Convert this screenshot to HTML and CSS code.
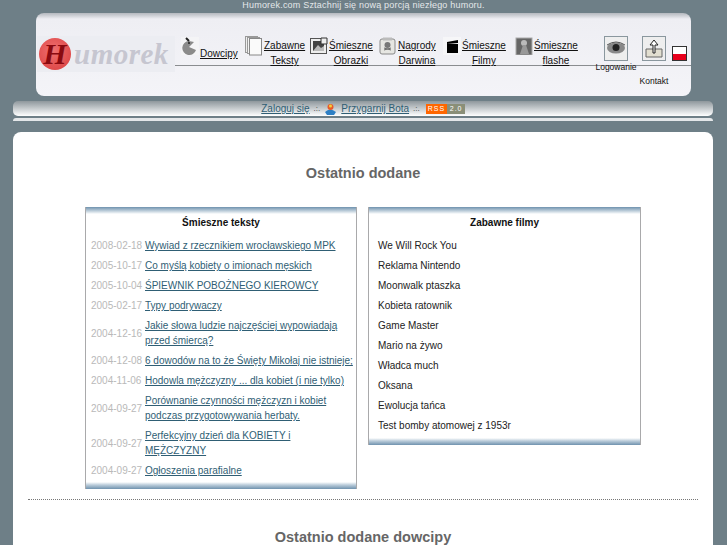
FILE: index.html
```html
<!DOCTYPE html>
<html lang="pl">
<head>
<meta charset="utf-8">
<title>Humorek</title>
<link rel="stylesheet" href="styles.css">
</head>
<body>
<p class="tagline">Humorek.com Sztachnij się nową porcją niezłego humoru.</p>
<header class="header">
  <div class="logo">
    <span class="logo-ball">H</span>
    <span class="logo-text">umorek</span>
  </div>
  <nav class="nav">
    <a class="nav-item w-dowcipy" href="#">
      <svg class="ico" viewBox="0 0 18 18"><rect width="18" height="18" fill="#f4f4f6"/><path d="M9 3a7 7 0 1 0 7 9L9 9l5-5z" fill="#8a8a8a" transform="translate(-1 1)"/><path d="M5 1l3 3" stroke="#222" stroke-width="2"/><circle cx="8" cy="6" r="1" fill="#222"/></svg>
      <span class="nav-label low">Dowcipy</span>
    </a>
    <a class="nav-item w-teksty" href="#">
      <svg class="ico tall" viewBox="0 0 18 20"><rect x="0.5" y="0.5" width="12" height="16" fill="#eee" stroke="#999"/><rect x="2.5" y="1.5" width="12" height="16" fill="#f2f2f2" stroke="#999"/><rect x="4.5" y="2.5" width="12" height="16.500" fill="#fafafa" stroke="#888"/></svg>
      <span class="nav-label">Zabawne<br>Teksty</span>
    </a>
    <a class="nav-item w-obrazki" href="#">
      <svg class="ico" viewBox="0 0 18 18"><rect x="0.500" y="1.500" width="16" height="15" fill="#eee" stroke="#555"/><rect x="3" y="4" width="11" height="10" fill="#444"/><path d="M3 14l5-6 3 3 3-2v5z" fill="#bbb"/><path d="M11 1h6v6h-6z" fill="#eee" stroke="#333"/></svg>
      <span class="nav-label">Śmieszne<br>Obrazki</span>
    </a>
    <a class="nav-item w-darwin" href="#">
      <svg class="ico" viewBox="0 0 18 18"><rect x="1" y="2" width="15" height="15" rx="2" fill="#e6e6e2" stroke="#888"/><rect x="4" y="0.500" width="9" height="3" fill="#bbb"/><circle cx="8.500" cy="8" r="3" fill="#777"/><path d="M5 13l7-2M5 11l7 2" stroke="#666"/></svg>
      <span class="nav-label">Nagrody<br>Darwina</span>
    </a>
    <a class="nav-item w-filmy" href="#">
      <svg class="ico" viewBox="0 0 18 18"><rect width="18" height="18" fill="#f6f6f8"/><rect x="4" y="7" width="11" height="9" fill="#000"/><path d="M4 5l11-2v3l-11 1z" fill="#000"/></svg>
      <span class="nav-label">Śmieszne<br>Filmy</span>
    </a>
    <a class="nav-item w-flashe" href="#">
      <svg class="ico" viewBox="0 0 18 18"><rect x="1" y="1" width="16" height="17" fill="#666" stroke="#aaa"/><circle cx="9" cy="6" r="3" fill="#bbb"/><path d="M5 17l3-9h3l3 9z" fill="#999"/></svg>
      <span class="nav-label">Śmieszne<br>flashe</span>
    </a>
    <a class="nav-item box-item w-logowanie" href="#">
      <svg class="box-ico" viewBox="0 0 24 25"><rect x="0.500" y="0.500" width="23" height="24" fill="#eee" stroke="#8a979e"/><ellipse cx="12" cy="12" rx="9" ry="5.500" fill="#888"/><circle cx="12" cy="11.500" r="3.500" fill="#222"/><path d="M3 9q9-6 18 0" stroke="#555" fill="none"/></svg>
      <span class="box-label">Logowanie</span>
    </a>
    <a class="nav-item box-item w-kontakt" href="#">
      <svg class="box-ico" viewBox="0 0 24 25"><rect x="0.500" y="0.500" width="23" height="24" fill="#eee" stroke="#8a979e"/><path d="M4 13h16v8H4z" fill="#e2dfd0" stroke="#666"/><path d="M11 17V9H8l4-5 4 5h-3v8z" fill="#fff" stroke="#222"/></svg>
      <span class="box-label lower">Kontakt</span>
    </a>
    <span class="flag"></span>
  </nav>
</header>
<div class="loginbar">
  <a href="#">Zaloguj się</a><span class="sep">.:.</span>
  <svg class="bot" viewBox="0 0 13 12"><path d="M1 9q5-5 11 0l-2 3H3z" fill="#2d7fc4"/><circle cx="6.500" cy="4" r="3" fill="#e85a2a"/><circle cx="6.500" cy="3" r="1.500" fill="#f3d23a"/></svg>
  <a href="#">Przygarnij Bota</a><span class="sep">.:.</span>
  <span class="rss"><b>RSS</b><i>2.0</i></span>
</div>
<div class="thinbar"></div>
<main class="main">
  <h1 class="title">Ostatnio dodane</h1>
  <div class="columns">
    <section class="panel left">
      <h2 class="panel-title">Śmieszne teksty</h2>
      <div class="dated">
        <span class="date">2008-02-18</span><a href="#">Wywiad z rzecznikiem wrocławskiego MPK</a>
        <span class="date">2005-10-17</span><a href="#">Co myślą kobiety o imionach męskich</a>
        <span class="date">2005-10-04</span><a href="#">ŚPIEWNIK POBOŻNEGO KIEROWCY</a>
        <span class="date">2005-02-17</span><a href="#">Typy podrywaczy</a>
        <span class="date">2004-12-16</span><a href="#">Jakie słowa ludzie najczęściej wypowiadają przed śmiercą?</a>
        <span class="date">2004-12-08</span><a href="#">6 dowodów na to że Święty Mikołaj nie istnieje;</a>
        <span class="date">2004-11-06</span><a href="#">Hodowla mężczyzny ... dla kobiet (i nie tylko)</a>
        <span class="date">2004-09-27</span><a href="#">Porównanie czynności mężczyzn i kobiet podczas przygotowywania herbaty.</a>
        <span class="date">2004-09-27</span><a href="#">Perfekcyjny dzień dla KOBIETY i MĘŻCZYZNY</a>
        <span class="date">2004-09-27</span><a href="#">Ogłoszenia parafialne</a>
      </div>
    </section>
    <section class="panel right">
      <h2 class="panel-title">Zabawne filmy</h2>
      <ul class="plain">
        <li>We Will Rock You</li>
        <li>Reklama Nintendo</li>
        <li>Moonwalk ptaszka</li>
        <li>Kobieta ratownik</li>
        <li>Game Master</li>
        <li>Mario na żywo</li>
        <li>Władca much</li>
        <li>Oksana</li>
        <li>Ewolucja tańca</li>
        <li>Test bomby atomowej z 1953r</li>
      </ul>
    </section>
  </div>
  <div class="divider"></div>
  <h1 class="title second">Ostatnio dodane dowcipy</h1>
</main>
</body>
</html>
```
FILE: styles.css
```css
* { box-sizing: border-box; }
html, body { margin: 0; height: 545px; overflow: hidden; }
body {
  background: #6e7f87;
  font-family: "Liberation Sans", Arial, sans-serif;
  font-size: 10px;
  color: #111;
}
.tagline {
  margin: 0;
  height: 13px;
  line-height: 11px;
  text-align: center;
  color: #e4e8ea;
  font-size: 9px;
  letter-spacing: 0.2px;
}
.header {
  display: flex;
  align-items: flex-start;
  width: 655px;
  height: 83px;
  margin-left: 36px;
  padding: 23px 0 0 1px;
  border-radius: 8px;
  background: linear-gradient(#b4b8be 0, #eeeef3 6px, #f4f4f8 100%);
}
.logo {
  display: flex;
  align-items: center;
  width: 138px;
  height: 36px;
  padding-left: 2px;
  background: #ecedf2;
  flex: none;
}
.logo-ball {
  width: 32px;
  height: 32px;
  border-radius: 50%;
  background: radial-gradient(circle at 45% 40%, #f07070, #d83c3c);
  color: #8a0a10;
  font: italic bold 30px/31px "Liberation Serif", serif;
  text-align: center;
  flex: none;
}
.logo-text {
  margin-left: 3px;
  font: italic bold 29px/32px "Liberation Serif", serif;
  color: #c6c6d0;
  letter-spacing: 0.5px;
}
.nav {
  position: relative;
  display: flex;
  align-items: flex-start;
  flex: 1;
  height: 60px;
}
.nav::before {
  content: "";
  position: absolute;
  left: 0;
  right: 0;
  top: 29px;
  height: 1px;
  background: #8a8d90;
}
.nav-item {
  position: relative;
  display: flex;
  align-items: flex-start;
  color: #111;
  text-decoration: underline;
  flex: none;
}
.ico { width: 18px; height: 18px; margin-top: 1px; flex: none; }
.ico.tall { height: 20px; margin-top: 0; }
.nav-label {
  display: block;
  margin: 2px 0 0 1px;
  font-size: 10px;
  line-height: 15px;
  text-align: center;
}
.nav-label.low { margin-top: 10px; }
.w-dowcipy { margin-left: 6px; width: 64px; }
.w-teksty { width: 65px; }
.w-obrazki { width: 69px; }
.w-darwin { width: 64px; }
.w-filmy { width: 72px; }
.w-flashe { width: 81px; }
.box-item { flex-direction: column; align-items: center; width: 24px; text-decoration: none; }
.w-logowanie { margin: 0 14px 0 8px; }
.w-kontakt { margin-right: 6px; }
.box-ico { width: 24px; height: 25px; flex: none; }
.box-label {
  display: block;
  margin-top: 1px;
  font-size: 8.500px;
  line-height: 11px;
  white-space: nowrap;
}
.box-label.lower { margin-top: 15px; }
.flag {
  width: 15px;
  height: 15px;
  margin-top: 10px;
  border: 1px solid #333;
  background: linear-gradient(#fff 50%, #e8001c 50%);
  flex: none;
}
.loginbar {
  display: flex;
  align-items: center;
  justify-content: center;
  gap: 4px;
  width: 700px;
  height: 15px;
  margin: 5px 0 0 13px;
  border-radius: 5px;
  background: linear-gradient(#8e979c, #eef0f1 85%, #fff);
  font-size: 10px;
}
.loginbar a { color: #2f5e74; }
.sep { color: #333; font-size: 8px; }
.bot { width: 13px; height: 12px; }
.rss { display: flex; margin-left: 2px; font-size: 7px; line-height: 10px; letter-spacing: 1px; }
.rss b { width: 21px; padding-left: 2px; background: #f60; color: #fff; font-weight: normal; }
.rss i { width: 18px; padding-left: 3px; background: #8a8f78; color: #fff; font-style: normal; }
.thinbar {
  width: 700px;
  height: 3px;
  margin: 2px 0 0 13px;
  border-radius: 3px 3px 0 0;
  background: #e4e7e9;
}
.main {
  width: 700px;
  height: 500px;
  margin: 11px 0 0 13px;
  padding-top: 32px;
  border-radius: 8px 8px 0 0;
  background: #fff;
}
.title {
  margin: 0;
  text-align: center;
  color: #666;
  font-size: 14.500px;
  line-height: 18px;
  font-weight: bold;
}
.columns {
  display: flex;
  align-items: flex-start;
  gap: 11px;
  margin: 25px 0 0 72px;
}
.panel {
  border: 1px solid #a9a9ab;
  border-top: 0;
  border-bottom: 0;
  padding: 7px 2px 9px 5px;
  background:
    linear-gradient(#6f92ae, #d4dfe7 5px, #fff 7px) top / 100% 7px no-repeat,
    linear-gradient(#fff, #b9cbd9 3px, #6f92ae 7px) bottom / 100% 7px no-repeat,
    #fff;
}
.left { width: 272px; height: 282px; }
.right { width: 273px; height: 238px; padding-left: 9px; padding-right: 5px; }
.panel-title {
  margin: 0 0 6px;
  padding-right: 3px;
  text-align: center;
  font-size: 10px;
  line-height: 18px;
  font-weight: bold;
  color: #111;
}
.right .panel-title { margin-bottom: 4px; padding-right: 4px; }
.dated {
  display: grid;
  grid-template-columns: 54px 1fr;
  align-items: center;
  row-gap: 5px;
  font-size: 10px;
  line-height: 15px;
}
.date { color: #b9b9b9; }
.dated a { color: #2f5e74; }
.plain { list-style: none; margin: 0; padding: 0; font-size: 10px; line-height: 20px; color: #222; }
.divider {
  margin: 10px 15px 0;
  border-top: 1px dotted #777;
}
.title.second { margin-top: 28px; }
```
